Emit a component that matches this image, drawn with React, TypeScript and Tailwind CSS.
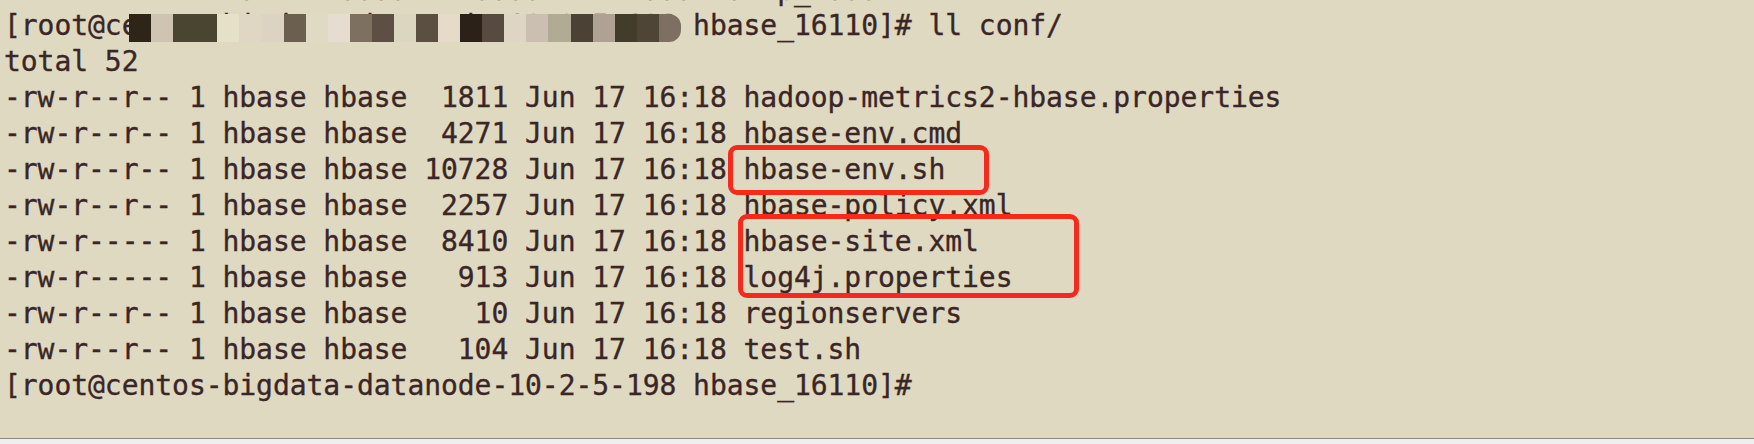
import React from 'react';

// ls output shown in the terminal
const rows: string[] = [
  '-rw-r--r-- 1 hbase hbase  1811 Jun 17 16:18 hadoop-metrics2-hbase.properties',
  '-rw-r--r-- 1 hbase hbase  4271 Jun 17 16:18 hbase-env.cmd',
  '-rw-r--r-- 1 hbase hbase 10728 Jun 17 16:18 hbase-env.sh',
  '-rw-r--r-- 1 hbase hbase  2257 Jun 17 16:18 hbase-policy.xml',
  '-rw-r----- 1 hbase hbase  8410 Jun 17 16:18 hbase-site.xml',
  '-rw-r----- 1 hbase hbase   913 Jun 17 16:18 log4j.properties',
  '-rw-r--r-- 1 hbase hbase    10 Jun 17 16:18 regionservers',
  '-rw-r--r-- 1 hbase hbase   104 Jun 17 16:18 test.sh',
];

// pixelated blur that hides the host name on the first prompt
const mosaic: { color: string; span: number }[] = [
  { color: '#2e2417', span: 1 },
  { color: '#cec4b1', span: 1 },
  { color: '#4a4530', span: 2 },
  { color: '#e5e0c8', span: 1 },
  { color: '#e0d6c4', span: 1 },
  { color: '#ddd3c3', span: 1 },
  { color: '#6b5f50', span: 1 },
  { color: '#e0dac5', span: 1 },
  { color: '#e6dccf', span: 1 },
  { color: '#7d7060', span: 1 },
  { color: '#5e4f44', span: 1 },
  { color: '#dbd6c0', span: 1 },
  { color: '#5a4f40', span: 1 },
  { color: '#e5dbc8', span: 1 },
  { color: '#2c2118', span: 1 },
  { color: '#574a40', span: 1 },
  { color: '#dfd5c4', span: 1 },
  { color: '#cbbfb2', span: 1 },
  { color: '#b1ab95', span: 1 },
  { color: '#4c4135', span: 1 },
  { color: '#afa295', span: 1 },
  { color: '#423c2a', span: 1 },
  { color: '#4f4537', span: 1 },
  { color: '#7d7063', span: 1 },
];

const prompt = '[root@centos-bigdata-datanode-10-2-5-198 hbase_16110]#';

// only the very bottom of the previous line is still on screen
const cutLine = '              s     ssss    ssss      sss  s  p_ sss';

const App = () => {
  return (
    <div className="flex h-[444px] w-[1754px] flex-col overflow-hidden bg-[#efefef]">
      <div className="relative h-[438px] overflow-hidden bg-[#dfd9c1] pl-[4px] font-['DejaVu_Sans_Mono',monospace] text-[28px] leading-[36px] tracking-[-0.05px] text-[#3a2626] [-webkit-text-stroke:0.35px_#3a2626]">
        <div className="mt-[-27px] h-[35px] whitespace-pre">{cutLine}</div>
        <div className="whitespace-pre">{prompt} ll conf/</div>
        <div className="whitespace-pre">total 52</div>
        {rows.map((row) => (
          <div key={row} className="whitespace-pre">
            {row}
          </div>
        ))}
        <div className="whitespace-pre">{prompt}</div>

        {/* 打码 */}
        <div className="absolute left-[129px] top-[14px] flex h-[28px] w-[552px] overflow-hidden rounded-r-[12px]">
          {mosaic.map((m, i) => (
            <div
              key={i}
              className="h-full"
              style={{ backgroundColor: m.color, flexGrow: m.span, flexBasis: 0 }}
            />
          ))}
        </div>

        {/* highlight boxes */}
        <div className="absolute left-[728px] top-[145px] h-[50px] w-[261px] rounded-[9px] border-[5px] border-[#f52a1c]" />
        <div className="absolute left-[738px] top-[214px] h-[84px] w-[341px] rounded-[9px] border-[5px] border-[#f52a1c]" />
      </div>
      <div className="h-[6px] border-t border-[#8a8a8a] bg-[#efefef]" />
    </div>
  );
};

export default App;
